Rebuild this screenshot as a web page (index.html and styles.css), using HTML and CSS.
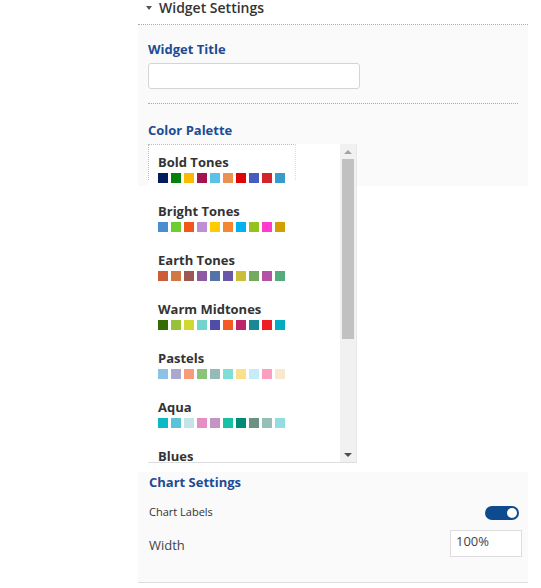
FILE: index.html
```html
<!DOCTYPE html>
<html lang="en">
<head>
    <meta charset="UTF-8">
    <title>Widget Settings</title>
    <link rel="stylesheet" href="styles.css">
</head>
<body>
    <div class="panel">
        <div class="panel-head">
            <span class="caret"></span>
            <span class="panel-title">Widget Settings</span>
        </div>

        <div class="widget-body">
            <div class="field-label">Widget Title</div>
            <input class="text-input" type="text">
            <div class="divider"></div>
            <div class="field-label">Color Palette</div>

            <div class="palette-list">
                <div class="palette-items" id="palette-items">
                    <!-- palettes get added here -->
                </div>
                <div class="scrollbar">
                    <div class="arrow arrow-up"></div>
                    <div class="track"><div class="thumb"></div></div>
                    <div class="arrow arrow-down"></div>
                </div>
            </div>
        </div>

        <div class="chart-settings">
            <div class="field-label">Chart Settings</div>
            <div class="setting-row">
                <span class="small-label">Chart Labels</span>
                <span class="toggle"><span class="knob"></span></span>
            </div>
            <div class="setting-row width-row">
                <span class="row-label">Width</span>
                <input class="width-input" type="text" value="100%">
            </div>
        </div>
    </div>

    <script>
        const palettes = [
            { name: 'Bold Tones', colors: ['#041b5e', '#02820a', '#fdb902', '#a2164d', '#5bc1e7', '#ec9251', '#e0030a', '#485cbe', '#d1252b', '#379ccc'] },
            { name: 'Bright Tones', colors: ['#4b8ed0', '#6ccd2e', '#f05719', '#bd8fd4', '#ffcb01', '#f48634', '#00b3f0', '#93c11e', '#ff3acd', '#d39e00'] },
            { name: 'Earth Tones', colors: ['#cd5d39', '#d07944', '#9b5855', '#8e59a3', '#5473a8', '#6958a8', '#cbbf3a', '#74aa60', '#b452a4', '#55ac7b'] },
            { name: 'Warm Midtones', colors: ['#336b04', '#99c23b', '#cfd932', '#72d5cc', '#4f4da8', '#f55a24', '#be2467', '#1a8994', '#ee1e26', '#00adc2'] },
            { name: 'Pastels', colors: ['#8bc2e5', '#a9a8cf', '#f79b79', '#8bc37a', '#95bab8', '#7fdfd7', '#fae08a', '#c6ecfc', '#fb9ec0', '#fbe6cf'] },
            { name: 'Aqua', colors: ['#0cb9c4', '#5cc2da', '#c5e4e8', '#e68ec4', '#c594c4', '#18c0a6', '#008a78', '#6a9181', '#95bfb7', '#93dce0'] },
            { name: 'Blues', colors: ['#0b3d91', '#1f5fbf', '#3a7bd5', '#5a9be6', '#7ab3ef', '#9ac9f5', '#b9dcf9', '#d6ebfc', '#2c4f7c', '#4d6f9e'] }
        ];

        const list = document.getElementById('palette-items');
        palettes.forEach((p, i) => {
            const item = document.createElement('div');
            item.className = i === 0 ? 'palette focused' : 'palette';
            const swatches = p.colors.map(c => `<span class="swatch" style="background:${c}"></span>`).join('');
            item.innerHTML = `<div class="palette-name">${p.name}</div><div class="swatches">${swatches}</div>`;
            list.appendChild(item);
        });
    </script>
</body>
</html>
```

FILE: styles.css
```css
body {
    margin: 0;
    background: #fff;
    font-family: "Open Sans", Arial, sans-serif;
    color: #333;
}

.panel {
    margin-left: 138px;
    width: 390px;
}

.panel-head {
    height: 24px;
    border-bottom: 1px dotted #aaa;
    display: flex;
    align-items: flex-start;
    padding-left: 8px;
}
.caret {
    width: 0;
    height: 0;
    border-left: 3.5px solid transparent;
    border-right: 3.5px solid transparent;
    border-top: 4px solid #555;
    margin-top: 6px;
    margin-right: 7px;
}
.panel-title {
    font-size: 14px;
    font-weight: 600;
    line-height: 19px;
    margin-top: -2px;
    color: #333;
}

.widget-body {
    background: #fafafa;
    height: 146px;
    padding: 15px 10px 0 10px;
}

.field-label {
    font-size: 13px;
    font-weight: 700;
    line-height: 18px;
    color: #1d4b94;
}

.text-input {
    display: block;
    box-sizing: border-box;
    width: 212px;
    height: 26px;
    margin: 5px 0 0 0;
    border: 1px solid #d4d4d4;
    border-radius: 3px;
    background: #fff;
}

.divider {
    border-top: 1px dotted #aaa;
    margin: 14px 0 17px 0;
}

.palette-list {
    display: flex;
    width: 209px;
    height: 319px;
    margin-top: 5px;
    background: #fff;
    border-bottom: 1px solid #ddd;
    border-right: 1px solid #e8e8e8;
    box-sizing: border-box;
    position: relative;
    z-index: 1;
}
.palette-items {
    flex: 1;
    overflow: hidden;
}
.palette {
    padding: 9px 10px 10px 10px;
    position: relative;
}
.palette.focused::before {
    content: "";
    position: absolute;
    left: 0;
    top: 0;
    width: 146px;
    height: 35px;
    border-top: 1px dotted #bbb;
    border-left: 1px dotted #bbb;
    border-right: 1px dotted #ddd;
}
.palette-name {
    font-size: 13px;
    font-weight: 700;
    line-height: 18px;
    color: #333;
}
.swatches {
    display: flex;
    gap: 3px;
    margin-top: 2px;
}
.swatch {
    width: 10px;
    height: 10px;
}

.scrollbar {
    width: 16px;
    background: #f1f1f1;
    display: flex;
    flex-direction: column;
}
.arrow {
    height: 15px;
    display: flex;
    align-items: center;
    justify-content: center;
}
.arrow-up::after {
    content: "";
    border-left: 4px solid transparent;
    border-right: 4px solid transparent;
    border-bottom: 4px solid #a3a3a3;
}
.arrow-down::after {
    content: "";
    border-left: 4px solid transparent;
    border-right: 4px solid transparent;
    border-top: 4px solid #505050;
}
.track {
    flex: 1;
    padding: 0 2px;
}
.thumb {
    height: 180px;
    background: #c1c1c1;
}

.chart-settings {
    margin-top: 286px;
    background: #fafafa;
    border-bottom: 1px solid #ddd;
    padding: 1px 6px 25px 11px;
}
.setting-row {
    display: flex;
    justify-content: space-between;
    align-items: flex-start;
    margin-top: 15px;
}
.width-row {
    margin-top: 10px;
}
.small-label {
    font-size: 11px;
    line-height: 12px;
    color: #333;
}
.toggle {
    width: 34px;
    height: 14px;
    border-radius: 7px;
    background: #0d4a8e;
    margin-right: 3px;
    display: flex;
    justify-content: flex-end;
    align-items: center;
    padding-right: 2px;
    box-sizing: border-box;
}
.knob {
    width: 10px;
    height: 10px;
    border-radius: 50%;
    background: #fff;
}
.row-label {
    font-size: 13px;
    color: #444;
    padding-top: 6px;
}
.width-input {
    box-sizing: border-box;
    width: 72px;
    height: 27px;
    margin: 0;
    border: 1px solid #ddd;
    background: #fff;
    font-family: "Open Sans", Arial, sans-serif;
    font-size: 13px;
    color: #444;
    padding: 0 5px 6px 5px;
}
```
